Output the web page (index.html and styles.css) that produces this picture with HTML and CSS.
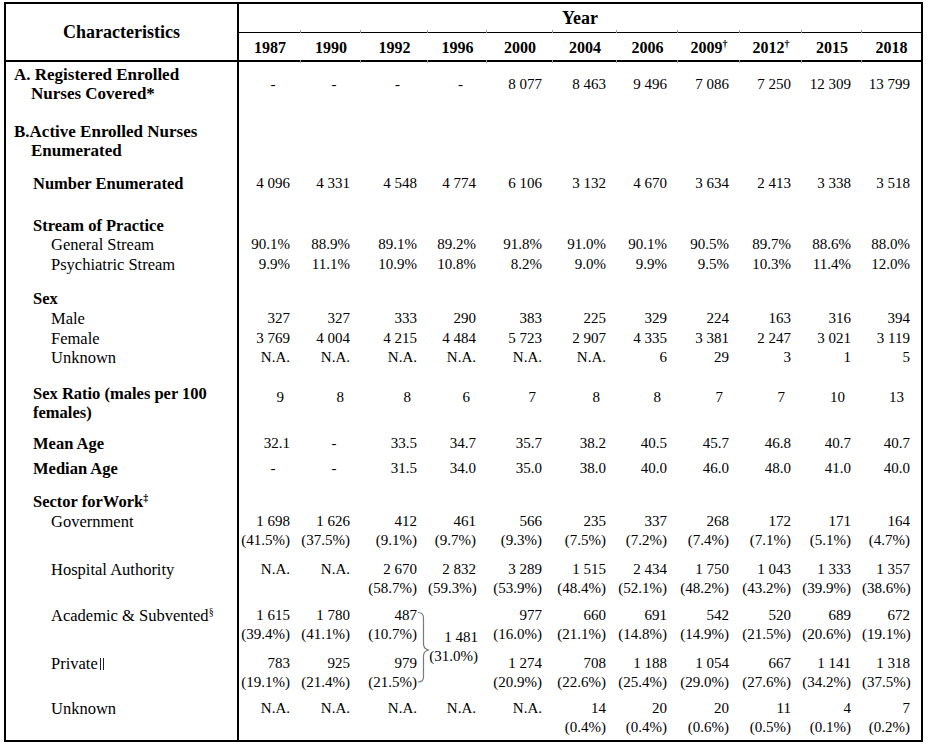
FILE: index.html
```html
<!DOCTYPE html>
<html>
<head>
<meta charset="utf-8">
<link rel="stylesheet" href="styles.css">
</head>
<body>
<table class="t">
<colgroup>
<col class="c0"><col class="c63"><col class="c60"><col class="c67"><col class="c59"><col class="c66"><col class="c64"><col class="c61"><col class="c62"><col class="c62"><col class="c60"><col class="c60">
</colgroup>
<tr class="h1"><th class="ch" rowspan="2">Characteristics</th><th class="year" colspan="11">Year</th></tr>
<tr class="h2"><th>1987</th><th>1990</th><th>1992</th><th>1996</th><th>2000</th><th>2004</th><th>2006</th><th>2009<sup>†</sup></th><th>2012<sup>†</sup></th><th>2015</th><th>2018</th></tr>

<tr class="ra"><td class="lb b hang">A. Registered Enrolled<br>Nurses Covered*</td><td class="n v d">-</td><td class="n v d">-</td><td class="n v d">-</td><td class="n v d">-</td><td class="n v">8 077</td><td class="n v">8 463</td><td class="n v">9 496</td><td class="n v">7 086</td><td class="n v">7 250</td><td class="n v">12 309</td><td class="n v">13 799</td></tr>

<tr class="rb"><td class="lb b hang">B.Active Enrolled Nurses<br>Enumerated</td><td colspan="11"></td></tr>

<tr class="rne"><td class="lb b i1">Number Enumerated</td><td class="n">4 096</td><td class="n">4 331</td><td class="n">4 548</td><td class="n">4 774</td><td class="n">6 106</td><td class="n">3 132</td><td class="n">4 670</td><td class="n">3 634</td><td class="n">2 413</td><td class="n">3 338</td><td class="n">3 518</td></tr>

<tr class="rsop"><td class="lb b i1">Stream of Practice</td><td colspan="11"></td></tr>
<tr class="rgs"><td class="lb i2">General Stream</td><td class="n">90.1%</td><td class="n">88.9%</td><td class="n">89.1%</td><td class="n">89.2%</td><td class="n">91.8%</td><td class="n">91.0%</td><td class="n">90.1%</td><td class="n">90.5%</td><td class="n">89.7%</td><td class="n">88.6%</td><td class="n">88.0%</td></tr>
<tr class="rps"><td class="lb i2">Psychiatric Stream</td><td class="n">9.9%</td><td class="n">11.1%</td><td class="n">10.9%</td><td class="n">10.8%</td><td class="n">8.2%</td><td class="n">9.0%</td><td class="n">9.9%</td><td class="n">9.5%</td><td class="n">10.3%</td><td class="n">11.4%</td><td class="n">12.0%</td></tr>

<tr class="rsex"><td class="lb b i1">Sex</td><td colspan="11"></td></tr>
<tr class="rmale"><td class="lb i2">Male</td><td class="n">327</td><td class="n">327</td><td class="n">333</td><td class="n">290</td><td class="n">383</td><td class="n">225</td><td class="n">329</td><td class="n">224</td><td class="n">163</td><td class="n">316</td><td class="n">394</td></tr>
<tr class="rfem"><td class="lb i2">Female</td><td class="n">3 769</td><td class="n">4 004</td><td class="n">4 215</td><td class="n">4 484</td><td class="n">5 723</td><td class="n">2 907</td><td class="n">4 335</td><td class="n">3 381</td><td class="n">2 247</td><td class="n">3 021</td><td class="n">3 119</td></tr>
<tr class="runk"><td class="lb i2">Unknown</td><td class="n">N.A.</td><td class="n">N.A.</td><td class="n">N.A.</td><td class="n">N.A.</td><td class="n">N.A.</td><td class="n">N.A.</td><td class="n">6</td><td class="n">29</td><td class="n">3</td><td class="n">1</td><td class="n">5</td></tr>

<tr class="rsr"><td class="lb b i1">Sex Ratio (males per 100<br>females)</td><td class="n v sr">9</td><td class="n v sr">8</td><td class="n v sr">8</td><td class="n v sr">6</td><td class="n v sr">7</td><td class="n v sr">8</td><td class="n v sr">8</td><td class="n v sr">7</td><td class="n v sr">7</td><td class="n v sr">10</td><td class="n v sr">13</td></tr>

<tr class="rmean"><td class="lb b i1">Mean Age</td><td class="n">32.1</td><td class="n d">-</td><td class="n">33.5</td><td class="n">34.7</td><td class="n">35.7</td><td class="n">38.2</td><td class="n">40.5</td><td class="n">45.7</td><td class="n">46.8</td><td class="n">40.7</td><td class="n">40.7</td></tr>
<tr class="rmed"><td class="lb b i1">Median Age</td><td class="n d">-</td><td class="n d">-</td><td class="n">31.5</td><td class="n">34.0</td><td class="n">35.0</td><td class="n">38.0</td><td class="n">40.0</td><td class="n">46.0</td><td class="n">48.0</td><td class="n">41.0</td><td class="n">40.0</td></tr>

<tr class="rsec"><td class="lb b i1">Sector forWork<sup>‡</sup></td><td colspan="11"></td></tr>
<tr class="rgov"><td class="lb i2">Government</td><td class="n">1 698<br>(41.5%)</td><td class="n">1 626<br>(37.5%)</td><td class="n">412<br>(9.1%)</td><td class="n">461<br>(9.7%)</td><td class="n">566<br>(9.3%)</td><td class="n">235<br>(7.5%)</td><td class="n">337<br>(7.2%)</td><td class="n">268<br>(7.4%)</td><td class="n">172<br>(7.1%)</td><td class="n">171<br>(5.1%)</td><td class="n">164<br>(4.7%)</td></tr>
<tr class="rhosp"><td class="lb i2">Hospital Authority</td><td class="n">N.A.</td><td class="n">N.A.</td><td class="n">2 670<br>(58.7%)</td><td class="n">2 832<br>(59.3%)</td><td class="n">3 289<br>(53.9%)</td><td class="n">1 515<br>(48.4%)</td><td class="n">2 434<br>(52.1%)</td><td class="n">1 750<br>(48.2%)</td><td class="n">1 043<br>(43.2%)</td><td class="n">1 333<br>(39.9%)</td><td class="n">1 357<br>(38.6%)</td></tr>
<tr class="racad"><td class="lb i2">Academic &amp; Subvented<sup>§</sup></td><td class="n">1 615<br>(39.4%)</td><td class="n">1 780<br>(41.1%)</td><td class="n">487<br>(10.7%)</td><td class="n merged" rowspan="2"><svg class="brace" width="14" height="72" viewBox="0 0 14 72"><path d="M1 1.5 Q6.5 1.5 6.5 7 L6.5 33 Q6.5 38 12 39 Q6.5 40 6.5 45 L6.5 66 Q6.5 71 1 71" fill="none" stroke="#7a7a7a" stroke-width="1.2"/></svg>1 481<br>(31.0%)</td><td class="n">977<br>(16.0%)</td><td class="n">660<br>(21.1%)</td><td class="n">691<br>(14.8%)</td><td class="n">542<br>(14.9%)</td><td class="n">520<br>(21.5%)</td><td class="n">689<br>(20.6%)</td><td class="n">672<br>(19.1%)</td></tr>
<tr class="rpriv"><td class="lb i2">Private<span class="dbar" aria-label="‖"></span></td><td class="n">783<br>(19.1%)</td><td class="n">925<br>(21.4%)</td><td class="n">979<br>(21.5%)</td><td class="n">1 274<br>(20.9%)</td><td class="n">708<br>(22.6%)</td><td class="n">1 188<br>(25.4%)</td><td class="n">1 054<br>(29.0%)</td><td class="n">667<br>(27.6%)</td><td class="n">1 141<br>(34.2%)</td><td class="n">1 318<br>(37.5%)</td></tr>
<tr class="runk2 last"><td class="lb i2">Unknown</td><td class="n">N.A.</td><td class="n">N.A.</td><td class="n">N.A.</td><td class="n">N.A.</td><td class="n">N.A.</td><td class="n">14<br>(0.4%)</td><td class="n">20<br>(0.4%)</td><td class="n">20<br>(0.6%)</td><td class="n">11<br>(0.5%)</td><td class="n">4<br>(0.1%)</td><td class="n">7<br>(0.2%)</td></tr>
</table>
</body>
</html>
```
FILE: styles.css
```css
html, body {
  margin: 0;
  padding: 0;
  background: #fff;
}
body {
  font-family: "Liberation Serif", "Times New Roman", serif;
  color: #000;
}
.t {
  border-collapse: collapse;
  table-layout: fixed;
  width: 917px;
  margin: 2px 0 0 4px;
  border: 2px solid #000;
}
.c0 { width: 233px; }
.c59 { width: 59px; }
.c60 { width: 60px; }
.c61 { width: 61px; }
.c62 { width: 62px; }
.c63 { width: 63px; }
.c64 { width: 64px; }
.c66 { width: 66px; }
.c67 { width: 67px; }

th, td {
  padding: 0;
  vertical-align: top;
  line-height: 19px;
  white-space: nowrap;
}
th {
  font-weight: bold;
  font-size: 16px;
  text-align: center;
  vertical-align: middle;
}
th.ch {
  font-size: 18px;
  border-right: 2px solid #000;
  border-bottom: 2px solid #000;
}
th.year {
  font-size: 18px;
  padding-top: 2px;
}
.h1 { height: 29px; }
.h2 { height: 29px; }
.h2 th {
  position: relative;
  border-top: 1px solid #000;
  border-bottom: 2px solid #000;
  padding-top: 2px;
}
.h2 th:not(:first-child)::before,
.h2 th:not(:first-child)::after {
  content: "";
  position: absolute;
  left: -1px;
  width: 1px;
  height: 3px;
  background: #9a9a9a;
}
.h2 th:not(:first-child)::before { top: -3px; }
.h2 th:not(:first-child)::after { bottom: -3px; }
sup {
  font-size: 10px;
  line-height: 0;
  vertical-align: 6px;
}

.lb {
  font-size: 16.5px;
  border-right: 2px solid #000;
}
.b { font-weight: bold; }
.hang {
  padding-left: 25px;
  text-indent: -17px;
}
.b.hang { font-size: 17px; }
.i1 { padding-left: 27px; }
.i2 { padding-left: 45px; }
.dbar {
  display: inline-block;
  width: 2px;
  height: 12px;
  margin-left: 2px;
  border-left: 1px solid #222;
  border-right: 1px solid #222;
  vertical-align: -1px;
}

td.n {
  font-size: 15px;
  text-align: right;
  padding-right: 11px;
}
td.d {
  text-align: center;
  padding-right: 0;
  padding-left: 6px;
}
td.sr { padding-right: 17px; }

.ra { height: 53px; }
.ra td { padding-top: 3px; }
.ra td.v { padding-top: 13px; }
.rb { height: 56px; }
.rb td { padding-top: 7.5px; }
.rne { height: 42px; }
.rne td { padding-top: 3.5px; }
.rsop { height: 22px; }
.rsop td { padding-top: 3.5px; }
.rgs { height: 20px; }
.rgs td { padding-top: 0.5px; }
.rps { height: 34px; }
.rps td { padding-top: 0.5px; }
.rsex { height: 20px; }
.rsex td { padding-top: 0.5px; }
.rmale { height: 20px; }
.rfem { height: 19px; }
.runk { height: 27px; }
.rsr { height: 56px; }
.rsr td { padding-top: 9px; }
.rsr td.v { padding-top: 13.5px; }
.rmean { height: 27px; }
.rmean td { padding-top: 3px; }
.rmed { height: 33px; }
.rmed td { padding-top: 1px; }
.rsec { height: 20px; }
.rsec td { padding-top: 1px; }
.rgov { height: 48px; }
.rgov td { padding-top: 1px; }
.rhosp { height: 47px; }
.rhosp td { padding-top: 1px; }
.racad { height: 48px; }
.racad td { padding-top: 0.5px; }
.rpriv { height: 45px; }
.rpriv td { padding-top: 0.5px; }
.runk2 { height: 42px; }
.runk2 td { padding-top: 0.5px; }

.racad td.merged {
  position: relative;
  padding-top: 22.5px;
  padding-right: 9px;
}
.brace {
  position: absolute;
  left: -11px;
  top: 5px;
}
.last td.n { position: relative; }
.last td.n:not(:nth-child(2))::after {
  content: "";
  position: absolute;
  left: -1px;
  bottom: -5px;
  width: 1px;
  height: 3px;
  background: #9a9a9a;
}
```
